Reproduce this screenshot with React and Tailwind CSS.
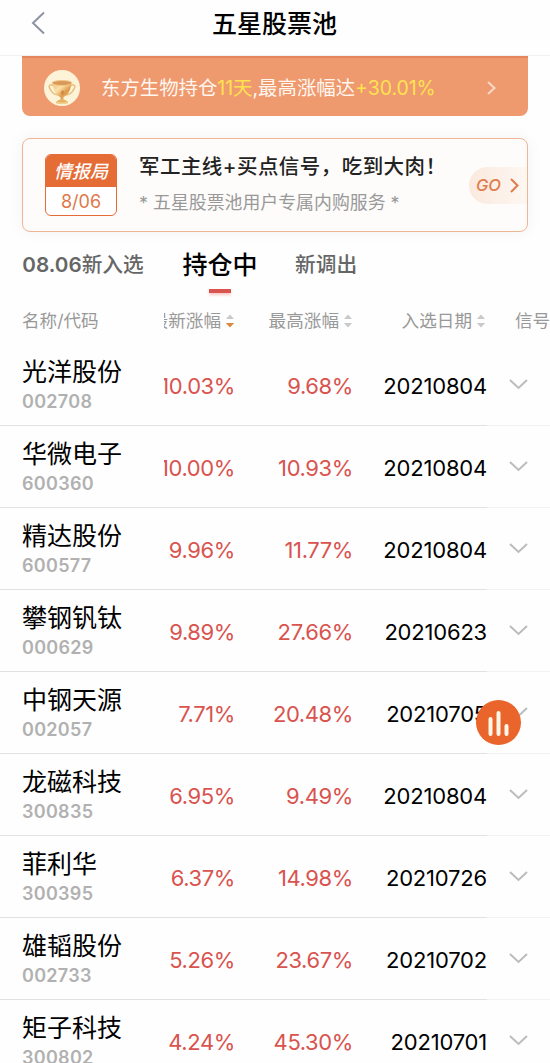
import { clsx } from "clsx";

const stocks = [
  { name: "光洋股份", code: "002708", latest: "10.03%", highest: "9.68%", date: "20210804" },
  { name: "华微电子", code: "600360", latest: "10.00%", highest: "10.93%", date: "20210804" },
  { name: "精达股份", code: "600577", latest: "9.96%", highest: "11.77%", date: "20210804" },
  { name: "攀钢钒钛", code: "000629", latest: "9.89%", highest: "27.66%", date: "20210623" },
  { name: "中钢天源", code: "002057", latest: "7.71%", highest: "20.48%", date: "20210705" },
  { name: "龙磁科技", code: "300835", latest: "6.95%", highest: "9.49%", date: "20210804" },
  { name: "菲利华", code: "300395", latest: "6.37%", highest: "14.98%", date: "20210726" },
  { name: "雄韬股份", code: "002733", latest: "5.26%", highest: "23.67%", date: "20210702" },
  { name: "矩子科技", code: "300802", latest: "4.24%", highest: "45.30%", date: "20210701" },
];

function Chevron({ d, className, width = 2 }) {
  return (
    <svg className={className} fill="none" stroke="currentColor" strokeWidth={width} aria-hidden="true">
      <path d={d} />
    </svg>
  );
}

function Trophy() {
  return (
    <svg className="-mt-[2px] h-9 w-9 shrink-0" viewBox="0 0 36 36" fill="none" aria-hidden="true">
      <defs>
        <linearGradient id="gold" x1="9" x2="27" y1="10" y2="30" gradientUnits="userSpaceOnUse">
          <stop stopColor="#f0bd75" />
          <stop offset=".4" stopColor="#fbdfa6" />
          <stop offset=".65" stopColor="#dc9a4e" />
          <stop offset="1" stopColor="#f5c87d" />
        </linearGradient>
      </defs>
      <circle cx="18" cy="18" r="18" fill="#fdf3d9" />
      <path d="M9 15.500c-4-2-5 1-2 5 1.500 3 4 4 7 4.500M27 15.500c4-2 5 1 2 5-1.500 3-4 4-7 4.500" stroke="#e9bd77" strokeWidth="1.500" />
      <path d="M8.500 13c1 8 3.500 12 8 14v3h3v-3c4.500-2 7-6 8-14Z" fill="url(#gold)" />
      <ellipse cx="18" cy="13" rx="10" ry="2.500" fill="#d9985c" stroke="#f2c983" />
      <path d="m18.500 20 2 2-2 3-2-2Z" fill="#d28a41" />
      <path d="M12 33c0-2 3-3.500 6-3.500s6 1.500 6 3.500c-3 1.500-9 1.500-12 0Z" fill="#e5b367" />
      <path d="M13 32.500c3 1 7 1 10 0" stroke="#fae0a3" />
    </svg>
  );
}

function SortIcon({ active }) {
  return (
    <svg className="ml-1 h-[14px] w-[10px] shrink-0" viewBox="0 0 10 14" aria-hidden="true">
      <path d="M5 0.500 9 5H1Z" fill="#c9c9c9" />
      <path d="M5 13.500 9.200 9H.8Z" fill={active ? "#dc873f" : "#c9c9c9"} />
    </svg>
  );
}

function StockRow({ stock }) {
  return (
    <li className="flex h-[82px] shrink-0">
      <div className="flex w-[487px] border-b border-[#e2e2e4]">
        <div className="w-[164px] pl-[22px] pt-[10px]">
          <p className="text-[25px] leading-[36px] text-black">{stock.name}</p>
          <p className="pt-px text-[18px] font-semibold leading-[22px] tracking-[0.3px] text-[#b1b1b1]">{stock.code}</p>
        </div>
        <div className="flex w-[71px] items-center justify-end overflow-hidden pt-[3px] text-[22px] tracking-[-0.4px] text-[#d9534f]">
          {stock.latest}
        </div>
        <div className="flex w-[118px] items-center justify-end pt-[3px] text-[22px] tracking-[-0.4px] text-[#d9534f]">
          {stock.highest}
        </div>
        <div className="flex w-[134px] items-center justify-end pt-[3px] text-[22px] tracking-[-0.2px] text-black">
          {stock.date}
        </div>
      </div>
      <div className="flex flex-1 items-center border-b border-[#f2f2f4] pl-[22px] text-[#bcbcbe]">
        <Chevron className="h-[11px] w-[19px]" d="m1 1 8.500 8L18 1" />
      </div>
    </li>
  );
}

export default function App() {
  const tabs = ["08.06新入选", "持仓中", "新调出"];

  return (
    <div className="relative flex h-[1063px] w-[550px] flex-col overflow-hidden bg-[#fefefe] font-['Inter','Noto_Sans_CJK_SC',sans-serif]">
      <header className="flex h-[56px] shrink-0 items-center border-b border-[#f1f1f3] pl-[31px]">
        <button type="button" aria-label="返回" className="pb-[9px] text-[#8d93a3]">
          <Chevron className="h-[24px] w-[15px]" d="M13 1.500 2 12l11 10.500" />
        </button>
        <h1 className="ml-[166px] pb-2 text-[25px] font-medium leading-[36px] text-black">五星股票池</h1>
      </header>

      <section className="mx-[22px] flex h-[60px] shrink-0 items-center rounded-b-lg border-t-2 border-[#e58560] bg-[#ef996e] pl-[22px] pt-[4px]">
        <Trophy />
        <p className="ml-[21px] whitespace-nowrap text-[19.4px] text-[#fff6ee]">
          东方生物持仓<span className="text-[#ffe34f]">11天</span>,最高涨幅达
          <span className="text-[#ffe34f]">+30.01%</span>
        </p>
        <Chevron className="ml-auto mr-[32px] mt-[-3px] h-[14px] w-[9px] text-[#fbd9c4]" d="m1 1 6.500 6L1 13" />
      </section>

      <section className="mx-[22px] mt-[22px] flex h-[94px] shrink-0 rounded-lg border-[1.500px] border-[#efb595] bg-[#fdfcfa] shadow-[0_0_16px_rgba(0,0,0,0.05)]">
        <div className="ml-[22px] mt-[15px] h-[62px] w-[72px] shrink-0 overflow-hidden rounded-md border border-[#e56c35] bg-white text-center text-[#e07849]">
          <p className="h-[32px] bg-[#e56c35] text-[18px] font-medium italic leading-[34px] text-white">情报局</p>
          <p className="text-[18px] leading-[29px]">8/06</p>
        </div>
        <div className="ml-[22px] w-[330px] shrink-0 whitespace-nowrap pt-[12px]">
          <h2 className="text-[20.500px] font-medium leading-[32px] tracking-[0.45px] text-[#222]">军工主线+买点信号，吃到大肉！</h2>
          <p className="mt-[6px] text-[17.900px] leading-[28px] text-[#999]">* 五星股票池用户专属内购服务 *</p>
        </div>
        <button type="button" className="mt-[28px] flex h-[37px] flex-1 items-center rounded-l-full bg-gradient-to-r from-[#fbe9de] to-[#fdf7f2] pl-[7px] text-[16.500px] font-medium italic text-[#e07c4d]">
          GO
          <Chevron className="ml-[9px] h-[15px] w-[9px] shrink-0" d="m1 1 6.500 6.500L1 14" />
        </button>
      </section>

      <nav className="flex h-[66px] shrink-0 items-start pl-[22px] pt-[14px]">
        {tabs.map((tab, index) => (
          <button
            key={tab}
            type="button"
            className={clsx(
              "flex h-[48px] shrink-0 flex-col items-center whitespace-nowrap font-medium leading-[38px]",
              index === 0 && "w-[122px] text-[20.700px] text-[#666]",
              index === 1 && "ml-[38px] w-[76px] text-[25px] text-black",
              index === 2 && "ml-[37px] text-[20.700px] text-[#666]"
            )}
          >
            {index === 0 ? (
              <span>
                <b className="font-semibold">08.06</b>新入选
              </span>
            ) : (
              tab
            )}
            {index === 1 && <span className="mt-[5px] h-[4px] w-[22px] shrink-0 bg-[#d9534f] shadow-[0_2px_3px_#f5c6c4]" />}
          </button>
        ))}
      </nav>

      <div className="flex h-[46px] shrink-0 items-center whitespace-nowrap pt-px text-[17.600px] text-[#999]">
        <div className="w-[164px] pl-[22px]">名称/代码</div>
        <div className="flex w-[71px] items-center justify-end overflow-hidden">
          最新涨幅
          <SortIcon active />
        </div>
        <div className="flex w-[118px] items-center justify-end">
          最高涨幅
          <SortIcon />
        </div>
        <div className="flex w-[133px] items-center justify-end">
          入选日期
          <SortIcon />
        </div>
        <div className="w-[64px] overflow-hidden pl-[29px]">信号</div>
      </div>

      <ul className="flex flex-col">
        {stocks.map((stock) => (
          <StockRow key={stock.code} stock={stock} />
        ))}
      </ul>

      <button type="button" aria-label="行情" className="absolute left-[476px] top-[700px] h-[45px] w-[45px] rounded-full bg-[#e9652b]">
        <svg viewBox="0 0 45 45" stroke="#fff5e9" strokeWidth="4" strokeLinecap="round" aria-hidden="true">
          <path d="M14.500 19v15M22.500 13v21M30.500 26v8" />
        </svg>
      </button>
    </div>
  );
}
